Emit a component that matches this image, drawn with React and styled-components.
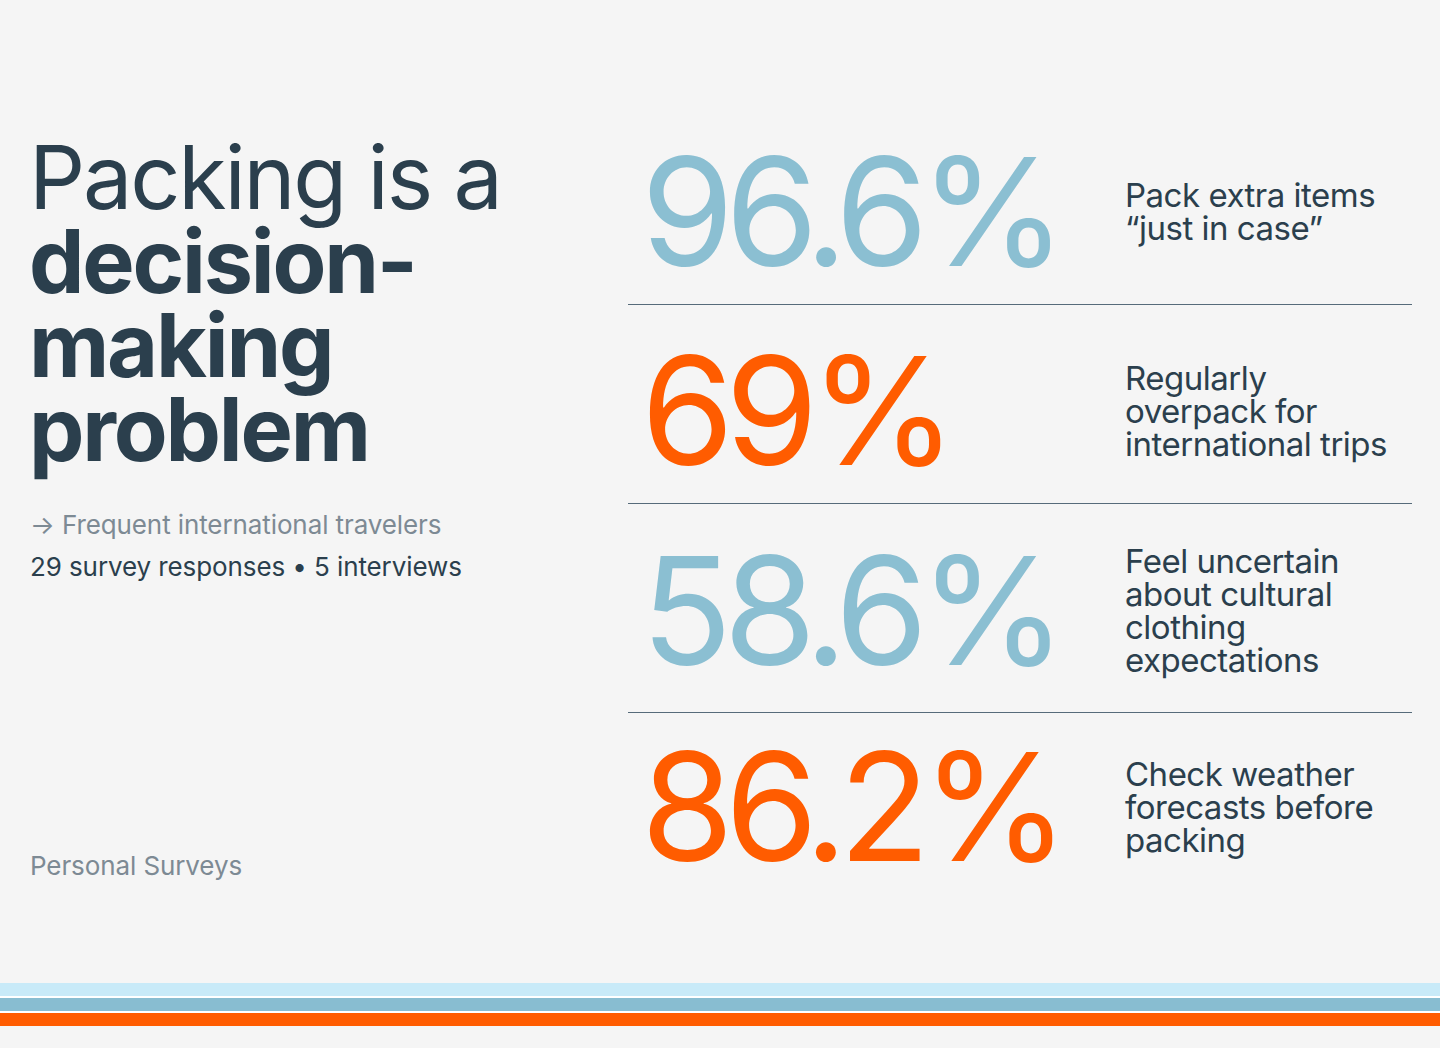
import React from "react";
import styled, { createGlobalStyle } from "styled-components";

const GlobalStyle = createGlobalStyle`
  html, body {
    margin: 0;
    padding: 0;
    background: #f5f5f5;
  }
  body {
    font-family: Inter, "Noto Sans", "Liberation Sans", sans-serif;
    color: #2b3f4d;
  }
`;

const Page = styled.div`
  width: 1440px;
  height: 1048px;
  display: flex;
  flex-direction: column;
  overflow: hidden;
`;

const Main = styled.main`
  display: grid;
  grid-template-columns: 598px 784px;
  padding: 106px 28px 0 30px;
`;

const Intro = styled.section`
  display: flex;
  flex-direction: column;
  padding-top: 29px;
  padding-bottom: 12px;
`;

const Headline = styled.h1`
  margin: 0 0 0 -1px;
  font-size: 88px;
  line-height: 84px;
  letter-spacing: -0.025em;
  font-weight: 400;
  color: #2b3f4d;

  strong {
    font-weight: 700;
  }
`;

const Meta = styled.div`
  margin-top: 33px;
  font-size: 26px;
  line-height: 42px;
  letter-spacing: -0.1px;
`;

const MetaLine = styled.div`
  color: ${(p) => (p.$muted ? "#7d8a94" : "#2b3f4d")};
`;

const Source = styled.div`
  margin-top: auto;
  font-size: 26px;
  line-height: 42px;
  letter-spacing: -0.1px;
  color: #7d8a94;
`;

const Stats = styled.section`
  display: flex;
  flex-direction: column;
`;

const StatRow = styled.div`
  display: flex;
  align-items: center;
  padding: ${(p) => (p.$last ? "34px 0 32px" : p.$tall ? "41px 0 35px" : "46px 0 32px")};
  padding-left: 13px;
  border-bottom: ${(p) => (p.$last ? "none" : "1px solid #566b7a")};
`;

const Figure = styled.div`
  width: 484px;
  flex-shrink: 0;
  font-size: 150px;
  line-height: 120px;
  letter-spacing: -0.058em;
  font-weight: 400;
  color: ${(p) => (p.$accent ? "#ff5c00" : "#8bbfd2")};
`;

const Label = styled.div`
  font-size: 33px;
  line-height: 33px;
  letter-spacing: -0.015em;
  color: #2b3f4d;
  max-width: 270px;
`;

const Stripes = styled.div`
  margin-top: auto;
  margin-bottom: 22px;
  display: flex;
  flex-direction: column;
`;

const Stripe = styled.div`
  height: 13px;
  background: ${(p) => p.$color};
  border-top: ${(p) => (p.$first ? "none" : "2px solid #ffffff")};
`;

const stats = [
  { value: "96.6%", label: "Pack extra items “just in case”" },
  { value: "69%", label: "Regularly overpack for international trips", accent: true },
  { value: "58.6%", label: "Feel uncertain about cultural clothing expectations", tall: true },
  { value: "86.2%", label: "Check weather forecasts before packing", accent: true },
];

export default function App() {
  return (
    <Page>
      <GlobalStyle />
      <Main>
        <Intro>
          <Headline>
            Packing is a<br />
            <strong>
              decision-
              <br />
              making
              <br />
              problem
            </strong>
          </Headline>
          <Meta>
            <MetaLine $muted>→ Frequent international travelers</MetaLine>
            <MetaLine>29 survey responses • 5 interviews</MetaLine>
          </Meta>
          <Source>Personal Surveys</Source>
        </Intro>
        <Stats>
          {stats.map((s, i) => (
            <StatRow key={s.value} $tall={s.tall} $last={i === stats.length - 1}>
              <Figure $accent={s.accent}>{s.value}</Figure>
              <Label>{s.label}</Label>
            </StatRow>
          ))}
        </Stats>
      </Main>
      <Stripes>
        <Stripe $first $color="#c8eaf8" />
        <Stripe $color="#88bdd1" />
        <Stripe $color="#ff5c00" />
      </Stripes>
    </Page>
  );
}
